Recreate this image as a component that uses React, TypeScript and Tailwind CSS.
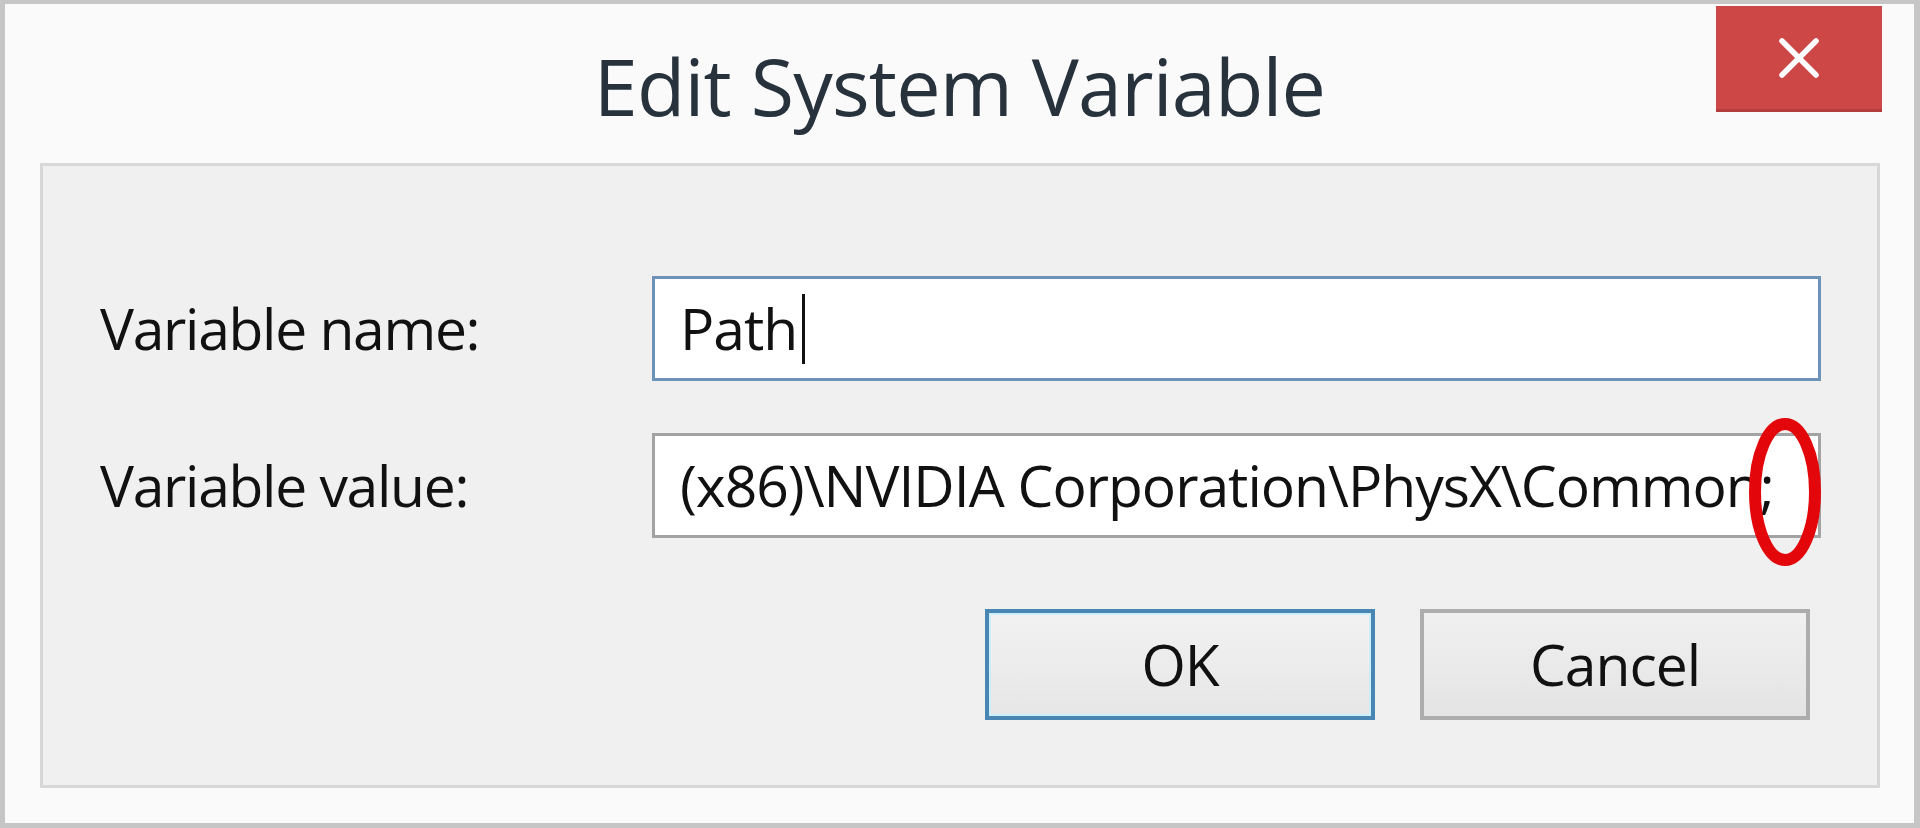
import React from 'react';

const FONT = { fontFamily: '"Open Sans", "Noto Sans", sans-serif' };

function Field({ value, focused, caret }: { value: string; focused?: boolean; caret?: boolean }) {
  return (
    <div
      className={`flex items-center flex-1 h-[105px] bg-white overflow-hidden border-[3px] pl-[25px] ${
        focused ? 'border-[#6f93b8]' : 'border-[#a3a3a3]'
      }`}
    >
      <span className="text-[57px] leading-none font-medium text-[#111] whitespace-nowrap tracking-[-1px]">{value}</span>
      {caret && <span className="inline-block w-[3px] h-[70px] bg-[#111] ml-[5px]" />}
    </div>
  );
}

export default function App() {
  return (
    <div
      style={FONT}
      className="w-[1920px] h-[828px] flex flex-col bg-[#fafafa] border-t-[4px] border-l-[5px] border-r-[6px] border-b-[5px] border-[#c6c6c6]"
    >
      {/* Title bar */}
      <div className="grid grid-cols-[1fr_auto_1fr] h-[159px]">
        <div />
        <h1 className="pt-[42px] text-[79px] leading-none font-normal text-[#27323d] tracking-[-0.8px] whitespace-nowrap">
          Edit System Variable
        </h1>
        <div className="flex justify-end items-start pt-[2px] pr-[32px]">
          <button className="w-[166px] h-[106px] bg-[#cd4747] border-b-[3px] border-[#b33c3c] flex items-center justify-center">
            <svg width="42" height="40" viewBox="0 0 42 40">
              <path d="M4 3 L38 37 M38 3 L4 37" stroke="#fff" strokeWidth="5.5" strokeLinecap="round" />
            </svg>
          </button>
        </div>
      </div>

      {/* Content panel */}
      <div className="flex-1 ml-[35px] mr-[34px] mb-[35px] border-[3px] border-[#d7d7d7] bg-[#f0f0f0] pt-[110px] pl-[57px] pr-[56px]">
        <div className="flex items-center">
          <label className="w-[552px] text-[57px] leading-none font-medium text-[#111] tracking-[-1.3px]">Variable name:</label>
          <Field value="Path" focused caret />
        </div>

        <div className="flex items-center mt-[52px]">
          <label className="w-[552px] text-[57px] leading-none font-medium text-[#111] tracking-[-1.3px]">Variable value:</label>
          <div className="relative flex flex-1">
            <Field value="(x86)\NVIDIA Corporation\PhysX\Common;" />
            {/* annotation */}
            <svg
              className="absolute right-[-1px] top-[-16px] overflow-visible"
              width="74"
              height="150"
              viewBox="0 0 74 150"
            >
              <ellipse cx="37" cy="75" rx="30" ry="68" fill="none" stroke="#e3070c" strokeWidth="12" />
            </svg>
          </div>
        </div>

        <div className="flex justify-end gap-[45px] mt-[71px] pr-[11px]">
          <button className="w-[390px] h-[111px] border-[4px] border-[#4a86b4] bg-gradient-to-b from-[#f2f2f2] to-[#e6e6e6] shadow-[inset_0_0_0_2px_#cdeefb] text-[57px] leading-none font-medium text-[#111] tracking-[-1px]">
            OK
          </button>
          <button className="w-[390px] h-[111px] border-[4px] border-[#adadad] bg-gradient-to-b from-[#f0f0f0] to-[#e4e4e4] text-[57px] leading-none font-medium text-[#111] tracking-[-1px]">
            Cancel
          </button>
        </div>
      </div>
    </div>
  );
}
